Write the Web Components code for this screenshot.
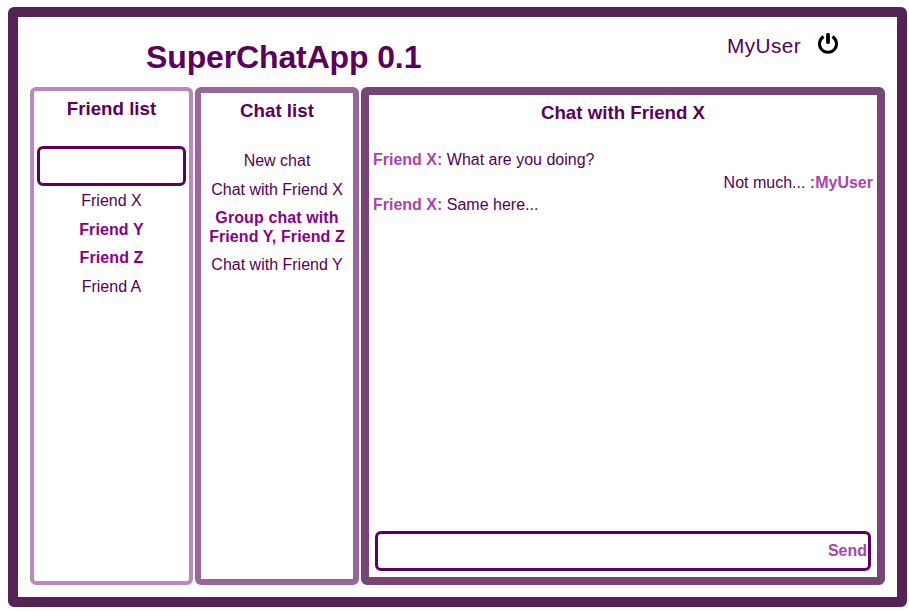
<!DOCTYPE html>
<html lang="en">
<head>
<meta charset="utf-8">
<title>SuperChatApp 0.1</title>
<style>
body { margin: 0; background: #fff; font-family: "Liberation Sans", Arial, sans-serif; font-size: 16px; color: #505; }
</style>
</head>
<body>
<chat-app></chat-app>
<script>
class BaseElement extends HTMLElement {
  render(html) {
    this.attachShadow({ mode: "open" }).innerHTML = "<style>*{box-sizing:border-box}</style>" + html;
  }
}

customElements.define("power-icon", class extends BaseElement {
  constructor() {
    super();
    this.render(`<style>:host{display:block;width:20px;height:21px}svg{display:block}</style>
      <svg width="20" height="21" viewBox="0 0 20 21" fill="none" stroke="#000">
        <path d="M5.6 3.6A8.5 8.5 0 1 0 14.4 3.6" stroke-width="3"/>
        <path d="M10 1.8V9.2" stroke-width="3.8" stroke-linecap="round"/>
      </svg>`);
  }
});

customElements.define("app-header", class extends BaseElement {
  constructor() {
    super();
    this.render(`<style>
      :host{display:grid;grid-template-columns:128px 1fr auto 20px;height:70px;padding-right:59px}
      h1{grid-column:2;margin:0;padding-top:22px;font-size:32px;line-height:37px;letter-spacing:-.13px;color:#5c005c}
      .user{padding:17px 17px 0 0;font-size:20.8px;line-height:24px;letter-spacing:.4px}
      power-icon{margin-top:16px}
      </style><h1>SuperChatApp 0.1</h1><div class="user"><slot></slot></div><power-icon></power-icon>`);
  }
});

customElements.define("chat-panel", class extends BaseElement {
  constructor() {
    super();
    this.render(`<style>
      :host{display:flex;flex-direction:column;box-sizing:border-box;border:var(--edge) solid var(--tone);border-radius:6px;padding:0 3px}
      h2{margin:0;padding-top:7px;height:var(--head,54px);font-size:18.72px;line-height:22px;text-align:center;color:#5c005c}
      </style><h2></h2><slot></slot>`);
    this.shadowRoot.querySelector("h2").textContent = this.getAttribute("heading");
  }
});

customElements.define("text-field", class extends BaseElement {
  constructor() {
    super();
    this.render(`<style>
      :host{display:flex;align-items:center;justify-content:flex-end;box-sizing:border-box;flex:none;height:40px;border:3px solid #5c005c;border-radius:6px;padding:0 1px;font-weight:bold;color:#a4a}
      </style><slot></slot>`);
  }
});

customElements.define("list-entry", class extends BaseElement {
  constructor() {
    super();
    this.render(`<style>
      :host{display:block;padding:5px 0;line-height:18.5px;text-align:center}
      :host([unread]){font-weight:bold;color:#808;letter-spacing:.1px}
      </style><slot></slot>`);
  }
});

customElements.define("chat-message", class extends BaseElement {
  constructor() {
    super();
    this.render(`<style>
      :host{display:block;padding:2px 1px;line-height:18.5px}
      :host([own]){text-align:right}
      b{color:#a4a}
      </style>`);
    const name = document.createElement("b");
    const slot = document.createElement("slot");
    const own = this.hasAttribute("own");
    name.textContent = own ? ":" + this.getAttribute("from") : this.getAttribute("from") + ":";
    this.shadowRoot.append(...(own ? [slot, " ", name] : [name, " ", slot]));
  }
});

customElements.define("chat-app", class extends BaseElement {
  constructor() {
    super();
    this.render(`<style>
      :host{display:block;box-sizing:border-box;width:899px;height:600px;margin:7px 2px 0 8px;border:10px solid #525;border-radius:6px}
      main{display:grid;grid-template-columns:163px 164px 524px;gap:2px;height:498px;padding-left:12px}
      .friends{--edge:4px;--tone:#b8b;--head:55px}
      .friends text-field{margin-bottom:1px}
      .chats{--edge:6px;--tone:#969}
      .talk{--edge:8px;--tone:#747}
      .messages{flex:1}
      .talk text-field{margin:0 3px 6px}
      </style>
      <app-header>MyUser</app-header>
      <main>
        <chat-panel class="friends" heading="Friend list">
          <text-field></text-field>
          <list-entry>Friend X</list-entry>
          <list-entry unread>Friend Y</list-entry>
          <list-entry unread>Friend Z</list-entry>
          <list-entry>Friend A</list-entry>
        </chat-panel>
        <chat-panel class="chats" heading="Chat list">
          <list-entry>New chat</list-entry>
          <list-entry>Chat with Friend X</list-entry>
          <list-entry unread>Group chat with<br>Friend Y, Friend Z</list-entry>
          <list-entry>Chat with Friend Y</list-entry>
        </chat-panel>
        <chat-panel class="talk" heading="Chat with Friend X">
          <div class="messages">
            <chat-message from="Friend X">What are you doing?</chat-message>
            <chat-message from="MyUser" own>Not much...</chat-message>
            <chat-message from="Friend X">Same here...</chat-message>
          </div>
          <text-field>Send</text-field>
        </chat-panel>
      </main>`);
  }
});
</script>
</body>
</html>
